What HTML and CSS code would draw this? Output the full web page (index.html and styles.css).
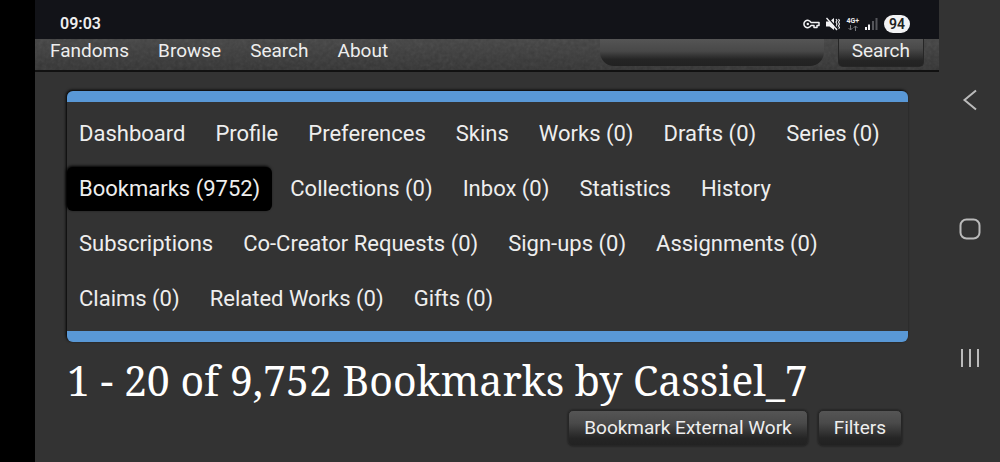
FILE: index.html
```html
<!DOCTYPE html>
<html lang="en">
<head>
    <meta charset="UTF-8">
    <title>Bookmarks</title>
    <meta name="viewport" content="width=device-width, initial-scale=1" />

    <link rel="stylesheet" href="styles.css">
</head>
<body>
    <div class="screen">
        <div class="page">
            <div class="statusBar">
                <span class="clock">09:03</span>
                <div class="statusIcons">
                    <svg width="17" height="12" viewBox="0 0 17 12" fill="none" stroke="#f2f2f4" stroke-width="1.5" stroke-linejoin="round">
                        <path d="M8 4.500A3.700 3.700 0 1 0 8 7.500H11V9.500H14V7.500H16V4.500Z" />
                        <circle cx="4.800" cy="6" r="1.200" fill="#f2f2f4" stroke="none" />
                    </svg>
                    <svg width="14" height="14" viewBox="0 0 14 14" fill="#f2f2f4">
                        <path d="M0 4.500H3.500L8 1V13L3.500 9.500H0Z" />
                        <path d="M10 2l1 1.500-1 1.500 1 2-1 2 1 1.500-1 1.500M12.500 2l1 1.500-1 1.500 1 2-1 2 1 1.500-1 1.500" fill="none" stroke="#f2f2f4" stroke-width="1.100" />
                        <path d="M2 1L12 12" stroke="#121318" stroke-width="1.500" />
                        <path d="M0.500 1L11 13" stroke="#f2f2f4" stroke-width="1.400" />
                    </svg>
                    <div class="network">
                        <span>4G+</span>
                        <svg width="10" height="6" viewBox="0 0 10 6" fill="none" stroke="#77787c">
                            <path d="M2.500 0V5M0.500 3L2.500 5L4.500 3M7.500 6V1M5.500 3L7.500 1L9.500 3" />
                        </svg>
                    </div>
                    <svg width="13" height="13" viewBox="0 0 13 13">
                        <path d="M0 10h2v3H0zM3 7.500h2V13H3z" fill="#f2f2f4" />
                        <path d="M7 4h2v9H7zM10.500 1h2v12h-2z" fill="#55565b" />
                    </svg>
                    <span class="battery">94</span>
                </div>
            </div>

            <header class="header">
                <svg class="grain" width="100%" height="100%" aria-hidden="true">
                    <filter id="grain">
                        <feTurbulence type="fractalNoise" baseFrequency="0.25" numOctaves="2" />
                        <feColorMatrix type="saturate" values="0" />
                    </filter>
                    <rect width="100%" height="100%" filter="url(#grain)" />
                </svg>
                <nav class="primaryNav">
                    <a href="#">Fandoms</a>
                    <a href="#">Browse</a>
                    <a href="#">Search</a>
                    <a href="#">About</a>
                </nav>
                <form class="search">
                    <input type="text" class="searchInput" aria-label="Search works">
                    <button type="button" class="button searchButton">Search</button>
                </form>
            </header>

            <main class="main">
                <nav class="dashboard">
                    <a href="#">Dashboard</a>
                    <a href="#">Profile</a>
                    <a href="#">Preferences</a>
                    <a href="#">Skins</a>
                    <a href="#">Works (0)</a>
                    <a href="#">Drafts (0)</a>
                    <a href="#">Series (0)</a>
                    <a href="#" class="current">Bookmarks (9752)</a>
                    <a href="#">Collections (0)</a>
                    <a href="#">Inbox (0)</a>
                    <a href="#">Statistics</a>
                    <a href="#">History</a>
                    <a href="#">Subscriptions</a>
                    <a href="#">Co-Creator Requests (0)</a>
                    <a href="#">Sign-ups (0)</a>
                    <a href="#">Assignments (0)</a>
                    <a href="#">Claims (0)</a>
                    <a href="#">Related Works (0)</a>
                    <a href="#">Gifts (0)</a>
                </nav>

                <h2 class="heading">1 - 20 of 9,752 Bookmarks by Cassiel_7</h2>

                <div class="actions">
                    <button type="button" class="button">Bookmark External Work</button>
                    <button type="button" class="button">Filters</button>
                </div>
            </main>
        </div>

        <div class="systemNav">
            <button type="button" aria-label="Back">
                <svg width="24" height="24" viewBox="0 0 24 24"><path d="M18 2.500L6.500 12L18 21.500" /></svg>
            </button>
            <button type="button" aria-label="Home">
                <svg width="24" height="24" viewBox="0 0 24 24"><rect x="2.500" y="2.500" width="19" height="19" rx="6" /></svg>
            </button>
            <button type="button" aria-label="Recent apps">
                <svg width="24" height="24" viewBox="0 0 24 24"><path d="M4 3V21M12 3V21M20 3V21" /></svg>
            </button>
        </div>
    </div>
</body>
</html>
```

FILE: styles.css
```css
* {
    box-sizing: border-box;
}

body {
    margin: 0;
    background: #000;
    color: #eee;
    font-family: Roboto, sans-serif;
}

a {
    color: inherit;
    text-decoration: none;
}

.screen {
    display: flex;
    min-height: 100vh;
    margin-left: 35px;
    background: #333;
}

.page {
    flex: 1;
}

.statusBar {
    display: flex;
    align-items: center;
    justify-content: space-between;
    height: 39px;
    padding: 8px 29px 0 25px;
    background: #121318;
}

.clock {
    font-size: 16px;
    font-weight: 600;
}

.statusIcons {
    display: flex;
    align-items: center;
    gap: 6px;
}

.network {
    display: flex;
    flex-direction: column;
    align-items: center;
    font-size: 7px;
    line-height: 8px;
    font-weight: 700;
}

.battery {
    padding: 0 5px;
    border-radius: 10px;
    background: #f2f2f4;
    color: #222;
    font-size: 14px;
    font-weight: 600;
    line-height: 18px;
}

.header {
    position: relative;
    display: flex;
    justify-content: space-between;
    height: 33px;
    padding: 0 15px;
    border-bottom: 2px solid #111;
    background: linear-gradient(#444, #343434);
    font-size: 19px;
    line-height: 24px;
}

.grain {
    position: absolute;
    inset: 0;
    opacity: 0.1;
}

.primaryNav {
    position: relative;
    display: flex;
    gap: 29px;
}

.search {
    position: relative;
    display: flex;
    gap: 14px;
}

.searchInput {
    width: 224px;
    height: 27px;
    border: 0;
    border-radius: 0 0 14px 14px;
    background: linear-gradient(#555, #484848 45%, #252525 75%, #222);
    color: #eee;
    font: inherit;
}

.button {
    padding: 0 15px;
    border: 1px solid #262626;
    border-radius: 5px;
    background: linear-gradient(#555, #4a4a4a 35%, #252525 80%, #222);
    box-shadow: 0 0 2px #111;
    color: #eee;
    font: inherit;
    font-size: 19px;
    line-height: 34px;
}

.searchButton {
    height: 28px;
    padding: 0 13px 3px;
    border-top: 0;
    border-radius: 0 0 5px 5px;
    box-shadow: none;
    line-height: 24px;
}

.main {
    padding: 19px 31px 0 32px;
}

.dashboard {
    display: flex;
    flex-wrap: wrap;
    gap: 11px 6px;
    padding: 10px 0;
    border-top: 11px solid #5998d6;
    border-bottom: 11px solid #5998d6;
    border-radius: 6px;
    box-shadow: -1px -1px 3px #000;
    font-size: 22px;
    line-height: 44px;
}

.dashboard a {
    padding: 0 12px;
}

.dashboard .current {
    border-radius: 6px;
    background: #000;
    box-shadow: -1px -1px 3px #000;
}

.heading {
    margin: 10px 0 0;
    color: #fff;
    font-family: "Noto Serif", "Liberation Serif", serif;
    font-size: 41px;
    font-weight: 400;
    line-height: 56px;
}

.actions {
    display: flex;
    justify-content: flex-end;
    gap: 10px;
    padding: 2px 6px 16px;
}

.systemNav {
    display: flex;
    flex-direction: column;
    align-items: center;
    justify-content: space-between;
    width: 61px;
    padding: 88px 0 92px;
}

.systemNav button {
    padding: 0;
    border: 0;
    background: none;
}

.systemNav svg {
    display: block;
    fill: none;
    stroke: #bbb;
    stroke-width: 2;
}
```
